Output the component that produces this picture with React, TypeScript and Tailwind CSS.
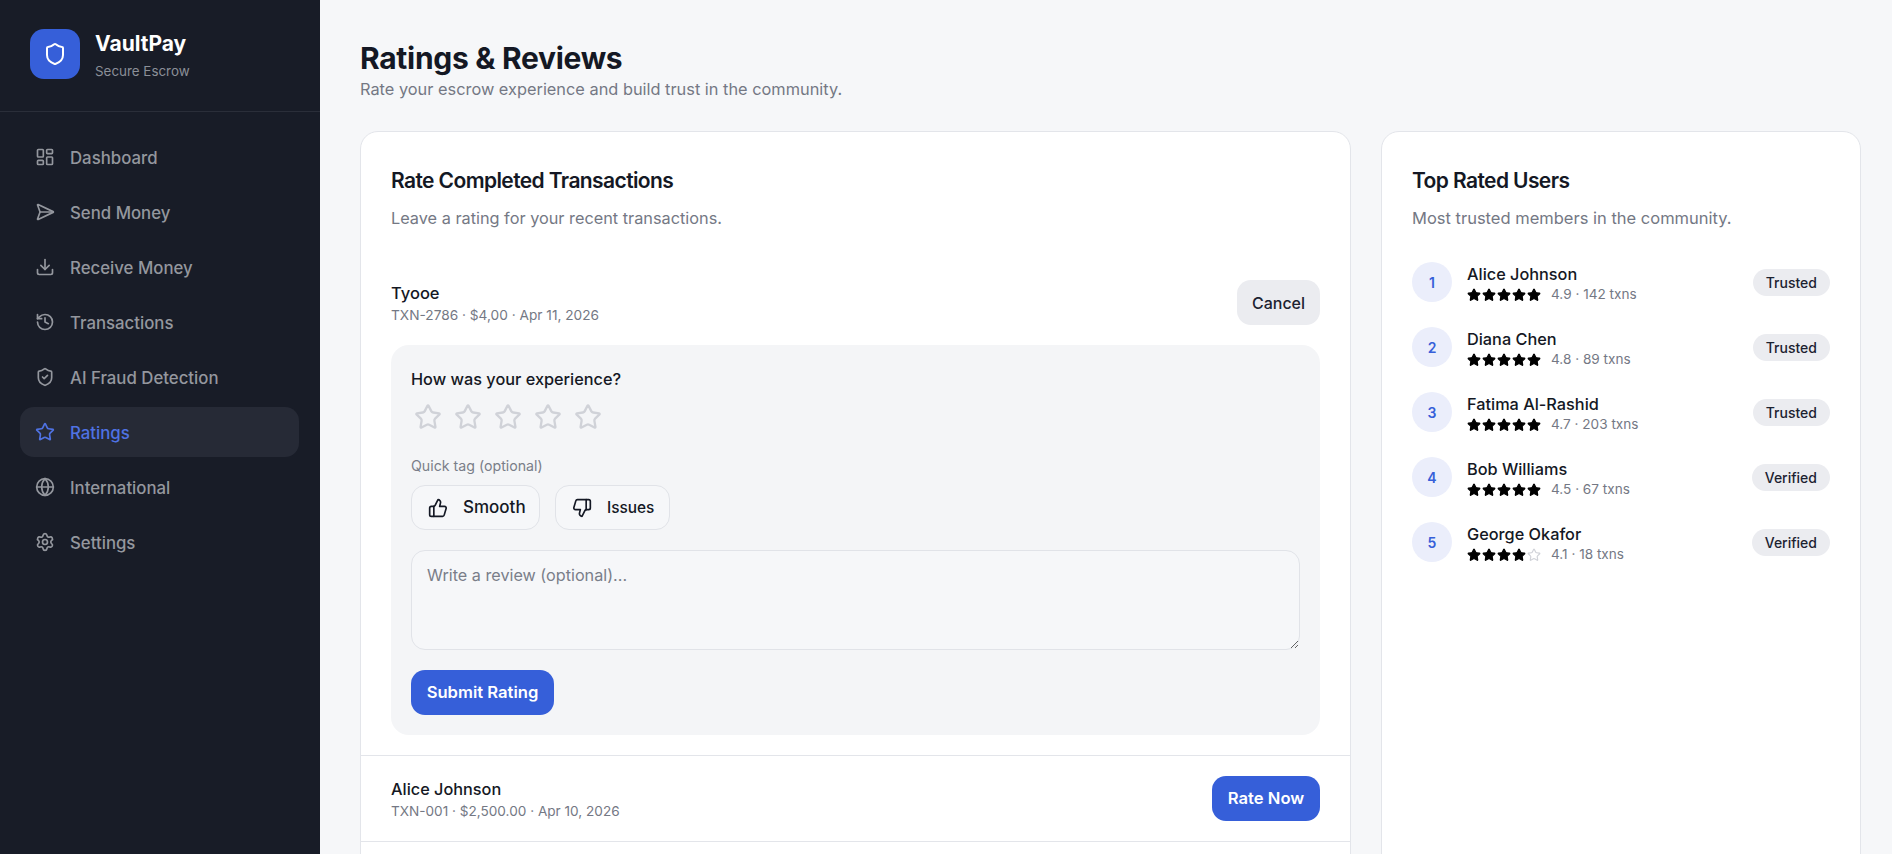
import {
  Download,
  Globe,
  History,
  LayoutDashboard,
  SendHorizontal,
  Settings,
  Shield,
  ShieldCheck,
  Star,
  ThumbsDown,
  ThumbsUp,
} from 'lucide-react';

const navItems = [
  { label: 'Dashboard', icon: LayoutDashboard },
  { label: 'Send Money', icon: SendHorizontal },
  { label: 'Receive Money', icon: Download },
  { label: 'Transactions', icon: History },
  { label: 'AI Fraud Detection', icon: ShieldCheck },
  { label: 'Ratings', icon: Star, active: true },
  { label: 'International', icon: Globe },
  { label: 'Settings', icon: Settings },
];

const topUsers = [
  { name: 'Alice Johnson', stars: 5, meta: '4.9 · 142 txns', badge: 'Trusted' },
  { name: 'Diana Chen', stars: 5, meta: '4.8 · 89 txns', badge: 'Trusted' },
  { name: 'Fatima Al-Rashid', stars: 5, meta: '4.7 · 203 txns', badge: 'Trusted' },
  { name: 'Bob Williams', stars: 5, meta: '4.5 · 67 txns', badge: 'Verified' },
  { name: 'George Okafor', stars: 4, meta: '4.1 · 18 txns', badge: 'Verified' },
];

function Sidebar() {
  return (
    <aside className="w-[320px] shrink-0 bg-[#181c27] flex flex-col">
      <div className="h-[112px] px-[30px] pb-[4px] flex items-center gap-[15px] border-b border-[#2a2e39]">
        <div className="w-[50px] h-[50px] rounded-[14px] bg-[#365fd9] flex items-center justify-center">
          <Shield size={24} className="text-white" />
        </div>
        <div className="pt-[4px]">
          <div className="text-[21px] leading-[28px] font-bold text-white">VaultPay</div>
          <div className="mt-[2.5px] text-[13.4px] leading-[20px] text-[#8b8f98]">Secure Escrow</div>
        </div>
      </div>
      <nav className="pl-[20px] pr-[21px] pt-[20px] flex flex-col gap-[5px]">
        {navItems.map((item) => (
          <div
            key={item.label}
            className={`h-[50px] px-[15px] rounded-[14px] flex items-center gap-[15px] text-[16.8px] font-medium ${
              item.active ? 'bg-[#262a36] text-[#4f72e3]' : 'text-[#94979e]'
            }`}
          >
            <item.icon size={20} />
            <span className="pt-[3px]">{item.label}</span>
          </div>
        ))}
      </nav>
    </aside>
  );
}

function TagButton({
  icon: Icon,
  label,
  className,
}: {
  icon: typeof ThumbsUp;
  label: string;
  className: string;
}) {
  return (
    <button
      className={`${className} h-[45px] px-[16px] rounded-[14px] border border-[#e1e3e8] bg-[#f6f7f9] flex items-center gap-[15px] font-medium text-[#141824] whitespace-nowrap`}
    >
      <Icon size={20} className="shrink-0" />
      {label}
    </button>
  );
}

function RatingForm() {
  return (
    <div className="mt-[20px] rounded-[18px] bg-[#f4f5f7] px-[20px] pt-[22px] pb-[20px]">
      <div className="text-[16.3px] leading-[24px] font-medium text-[#141824]">How was your experience?</div>
      <div className="mt-[12px] flex gap-[12px] pl-[3px]">
        {[1, 2, 3, 4, 5].map((i) => (
          <Star key={i} size={28} className="text-[#d0d2d8]" />
        ))}
      </div>
      <div className="mt-[25px] text-[14.2px] leading-[20px] text-[#7a7e89]">Quick tag (optional)</div>
      <div className="mt-[9px] flex gap-[15px]">
        <TagButton icon={ThumbsUp} label="Smooth" className="w-[129px] text-[17px]" />
        <TagButton icon={ThumbsDown} label="Issues" className="w-[115px] text-[15.4px]" />
      </div>
      <textarea
        placeholder="Write a review (optional)..."
        className="mt-[20px] block w-full h-[100px] rounded-[14px] border border-[#e1e3e8] bg-[#f6f7f9] px-[15px] py-[12px] text-[16.2px] leading-[24px] placeholder:text-[#7a7e89] outline-none"
      />
      <button className="mt-[20px] h-[45px] w-[143px] rounded-[14px] bg-[#365fd9] text-white text-[16.6px] font-semibold">
        Submit Rating
      </button>
    </div>
  );
}

function TopRatedCard() {
  return (
    <section className="h-[900px] rounded-[18px] bg-white border border-[#e3e5ea] p-[30px]">
      <h2 className="mt-[5px] text-[21px] leading-[28px] font-semibold tracking-[-0.6px] text-[#141824]">Top Rated Users</h2>
      <p className="mt-[11px] text-[16.5px] leading-[24px] text-[#747884]">Most trusted members in the community.</p>
      <div className="mt-[30px] flex flex-col gap-[21px]">
        {topUsers.map((user, idx) => (
          <div key={user.name} className="flex items-center gap-[15px]">
            <div className="w-[40px] h-[40px] rounded-full bg-[#ebeefb] text-[#365fd9] text-[14px] font-semibold flex items-center justify-center">
              {idx + 1}
            </div>
            <div className="flex-1 pt-[4px]">
              <div className="text-[16.3px] leading-[20px] font-medium text-[#141824]">{user.name}</div>
              <div className="flex items-center gap-[10px] h-[20px] pt-[1px]">
                <div className="flex gap-[1px]">
                  {[0, 1, 2, 3, 4].map((i) => (
                    <Star
                      key={i}
                      size={14}
                      className={i < user.stars ? 'text-black' : 'text-[#d0d2d8]'}
                      fill={i < user.stars ? 'currentColor' : 'none'}
                    />
                  ))}
                </div>
                <span className="text-[13.6px] text-[#747884]">{user.meta}</span>
              </div>
            </div>
            <span className="h-[27px] px-[13px] rounded-full bg-[#ebecf0] text-[14px] font-medium text-[#1c2230] flex items-center">
              {user.badge}
            </span>
          </div>
        ))}
      </div>
    </section>
  );
}

export default function App() {
  return (
    <div
      className="h-screen flex overflow-hidden bg-[#f6f7f9]"
      style={{ fontFamily: 'Inter, "Liberation Sans", sans-serif' }}
    >
      <Sidebar />
      <main className="flex-1 pl-[40px] pt-[40px]">
        <h1 className="text-[30px] leading-[36px] font-bold tracking-[-0.3px] text-[#141824]">Ratings &amp; Reviews</h1>
        <p className="mt-[1px] text-[16.35px] leading-[24px] text-[#747884]">
          Rate your escrow experience and build trust in the community.
        </p>
        <div className="mt-[30px] grid grid-cols-[991px_480px] gap-[30px]">
          <section className="h-[900px] rounded-[18px] bg-white border border-[#e3e5ea] pt-[30px]">
            <div className="px-[30px]">
              <h2 className="mt-[5px] text-[21px] leading-[28px] font-semibold tracking-[-0.6px] text-[#141824]">
                Rate Completed Transactions
              </h2>
              <p className="mt-[11px] text-[16.3px] leading-[24px] text-[#747884]">
                Leave a rating for your recent transactions.
              </p>
            </div>
            <div className="mt-[30px] px-[30px] pt-[20px] pb-[20px] border-b border-[#e3e5ea]">
              <div className="flex items-center justify-between">
                <div className="pt-[1px]">
                  <div className="text-[16.5px] leading-[24px] font-medium text-[#141824]">Tyooe</div>
                  <div className="text-[13.7px] leading-[20px] text-[#747884]">TXN-2786 · $4,00 · Apr 11, 2026</div>
                </div>
                <button className="h-[45px] w-[83px] rounded-[14px] bg-[#ebecf0] text-[16px] font-medium text-[#1c2230]">
                  Cancel
                </button>
              </div>
              <RatingForm />
            </div>
            <div className="px-[30px] py-[20px] flex items-center justify-between border-b border-[#e3e5ea]">
              <div>
                <div className="text-[16.3px] leading-[24px] font-medium text-[#141824]">Alice Johnson</div>
                <div className="text-[13.6px] leading-[20px] text-[#747884]">TXN-001 · $2,500.00 · Apr 10, 2026</div>
              </div>
              <button className="h-[45px] w-[108px] rounded-[14px] bg-[#365fd9] text-white text-[16.6px] font-semibold">
                Rate Now
              </button>
            </div>
          </section>
          <TopRatedCard />
        </div>
      </main>
    </div>
  );
}
